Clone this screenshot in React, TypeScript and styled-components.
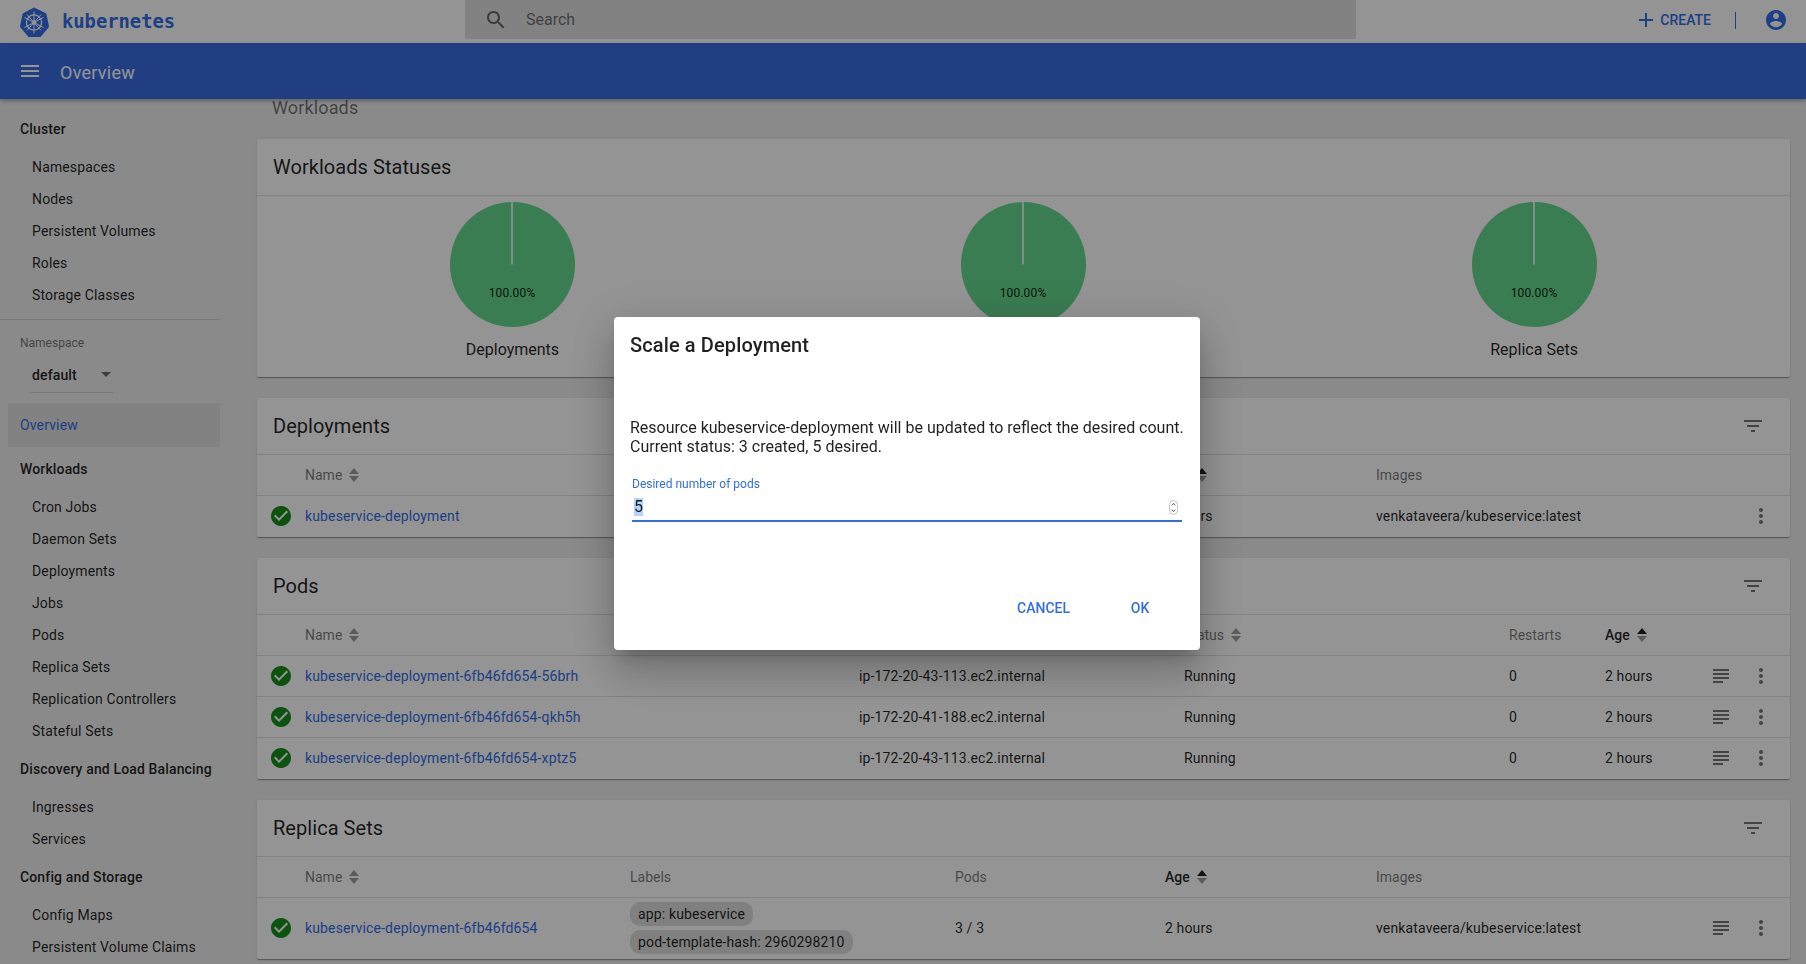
import React from "react";
import styled, { createGlobalStyle } from "styled-components";

const Global = createGlobalStyle`
  html, body { margin: 0; padding: 0; height: 100%; overflow: hidden; }
  body { font-family: Roboto, "Liberation Sans", sans-serif; font-size: 14px; letter-spacing: 0.14px; color: rgba(0,0,0,.87); background: #eeeeee; }
  * { box-sizing: border-box; }
`;

const BLUE = "#326de6";
const ICONS = {
  search: "M15.5 14h-.79l-.28-.27C15.41 12.59 16 11.11 16 9.5 16 5.91 13.09 3 9.5 3S3 5.91 3 9.5 5.91 16 9.5 16c1.61 0 3.09-.59 4.23-1.57l.27.28v.79l5 4.99L20.49 19l-4.99-5zm-6 0C7.01 14 5 11.99 5 9.5S7.01 5 9.5 5 14 7.01 14 9.5 11.99 14 9.5 14z",
  plus: "M19 13h-6v6h-2v-6H5v-2h6V5h2v6h6v2z",
  account: "M12 2C6.48 2 2 6.48 2 12s4.48 10 10 10 10-4.48 10-10S17.52 2 12 2zm0 3c1.66 0 3 1.34 3 3s-1.34 3-3 3-3-1.34-3-3 1.34-3 3-3zm0 14.2c-2.5 0-4.71-1.28-6-3.22.03-1.99 4-3.08 6-3.08 1.99 0 5.97 1.09 6 3.08-1.29 1.94-3.5 3.22-6 3.22z",
  menu: "M3 18h18v-2H3v2zm0-5h18v-2H3v2zm0-7v2h18V6H3z",
  filter: "M10 18h4v-2h-4v2zM3 6v2h18V6H3zm3 7h12v-2H6v2z",
  more: "M12 8c1.1 0 2-.9 2-2s-.9-2-2-2-2 .9-2 2 .9 2 2 2zm0 2c-1.1 0-2 .9-2 2s.9 2 2 2 2-.9 2-2-.9-2-2-2zm0 6c-1.1 0-2 .9-2 2s.9 2 2 2 2-.9 2-2-.9-2-2-2z",
  subject: "M14 17H4v2h10v-2zm6-8H4v2h16V9zM4 15h16v-2H4v2zM4 5v2h16V5H4z",
  check: "M12 2C6.48 2 2 6.48 2 12s4.48 10 10 10 10-4.48 10-10S17.52 2 12 2zm-2 15l-5-5 1.41-1.41L10 14.17l7.59-7.59L19 8l-9 9z",
};

const Icon = ({ d, color }: { d: string; color: string }) => (
  <svg width="24" height="24" viewBox="0 0 24 24" fill={color} style={{ display: "block", flex: "none" }}>
    <path d={d} />
  </svg>
);

const Page = styled.div`
  width: 1806px;
  height: 964px;
  overflow: hidden;
  display: flex;
  flex-direction: column;
  background: #eeeeee;
`;

const TopBar = styled.header`
  height: 43px;
  flex: none;
  display: flex;
  background: #ffffff;
`;
const Brand = styled.div`
  width: 465px;
  flex: none;
  display: flex;
  align-items: center;
  padding-left: 19px;
  gap: 13px;
`;
const BrandName = styled.span`
  font-family: "DejaVu Sans Mono", monospace;
  font-weight: 700;
  font-size: 18.8px;
  color: ${BLUE};
  line-height: 38px;
  letter-spacing: 0;
`;
const SearchBox = styled.div`
  width: 891px;
  height: 39px;
  flex: none;
  display: flex;
  align-items: center;
  gap: 18px;
  padding-left: 19px;
  background: #e0e0e0;
  border-radius: 0 0 2px 2px;
`;
const SearchHint = styled.span`
  font-size: 16px;
  letter-spacing: 0;
  color: rgba(0, 0, 0, 0.54);
`;
const Actions = styled.div`
  flex: 1;
  display: flex;
  align-items: center;
  justify-content: flex-end;
  padding-right: 18px;
  padding-bottom: 3px;
`;
const CreateButton = styled.span`
  display: flex;
  align-items: center;
  gap: 2px;
  font-weight: 500;
  font-size: 14px;
  letter-spacing: 0;
  color: ${BLUE};
`;
const VDivider = styled.span`
  width: 1px;
  height: 17px;
  margin: 0 28px 0 24px;
  background: ${BLUE};
`;

const ActionBar = styled.div`
  height: 56px;
  flex: none;
  display: flex;
  align-items: center;
  gap: 18px;
  padding-left: 18px;
  padding-bottom: 1px;
  background: #3b6ce0;
  position: relative;
  z-index: 1;
  box-shadow: 0 2px 4px rgba(0, 0, 0, 0.3);
`;
const BarTitle = styled.span`
  padding-top: 3px;
  font-size: 18px;
  letter-spacing: 0.25px;
  color: #ffffff;
`;

const Body = styled.div`
  flex: 1;
  min-height: 0;
  display: flex;
`;
const Sidebar = styled.nav`
  width: 241px;
  flex: none;
  padding-top: 14px;
`;
const NavHeading = styled.div`
  height: 32px;
  margin: 6px 0;
  padding-left: 20px;
  line-height: 32px;
  font-weight: 500;
  &:first-child { margin-top: 0; }
`;
const NavItem = styled.div`
  height: 32px;
  padding-left: 32px;
  line-height: 32px;
  color: rgba(0, 0, 0, 0.87);
`;
const NavDivider = styled.div`
  width: 220px;
  height: 1px;
  margin-top: 8px;
  background: rgba(0, 0, 0, 0.12);
`;
const NamespaceLabel = styled.div`
  margin-top: 15px;
  padding-left: 20px;
  font-size: 12px;
  line-height: 16px;
  letter-spacing: 0;
  color: rgba(0, 0, 0, 0.54);
`;
const NamespaceSelect = styled.div`
  width: 83px;
  height: 34px;
  margin: 8px 0 0 30px;
  padding: 0 2px 2px;
  display: flex;
  align-items: center;
  justify-content: space-between;
  font-weight: 500;
  border-bottom: 1px solid rgba(0, 0, 0, 0.12);
`;
const Caret = styled.span`
  width: 0;
  height: 0;
  border-left: 5px solid transparent;
  border-right: 5px solid transparent;
  border-top: 5px solid rgba(0, 0, 0, 0.54);
`;
const ActiveNav = styled.div`
  width: 212px;
  height: 44px;
  margin: 10px 0 0 8px;
  padding-left: 12px;
  line-height: 44px;
  color: ${BLUE};
  background: rgba(0, 0, 0, 0.06);
  border-radius: 2px;
`;

const Main = styled.main`
  flex: 1;
  min-width: 0;
  padding: 0 16.5px 0 16px;
`;
const Crumb = styled.div`
  height: 40px;
  padding-left: 15px;
  font-size: 18px;
  line-height: 18px;
  color: rgba(0, 0, 0, 0.54);
`;
const Card = styled.section`
  margin-bottom: 21px;
  background: #ffffff;
  border-radius: 2px;
  box-shadow: 0 2px 1px -1px rgba(0, 0, 0, 0.2), 0 1px 1px rgba(0, 0, 0, 0.14), 0 1px 3px rgba(0, 0, 0, 0.12);
`;
const CardHeader = styled.div`
  height: 57px;
  padding: 0 25px 1px 16px;
  display: flex;
  align-items: center;
  justify-content: space-between;
  font-size: 20px;
  letter-spacing: 0.05px;
  border-bottom: 1px solid rgba(0, 0, 0, 0.12);
`;
const Row = styled.div<{ $cols: string; $height: number }>`
  display: grid;
  grid-template-columns: ${(p) => p.$cols};
  align-items: center;
  height: ${(p) => p.$height}px;
  padding: 0 8px 1px 0;
  border-bottom: 1px solid rgba(0, 0, 0, 0.12);
  &:last-child { border-bottom: 0; }
`;
const HeadCell = styled.div<{ $active?: boolean }>`
  display: flex;
  align-items: center;
  gap: 7px;
  letter-spacing: 0;
  color: ${(p) => (p.$active ? "rgba(0,0,0,.87)" : "rgba(0,0,0,.54)")};
  font-weight: ${(p) => (p.$active ? 500 : 400)};
`;
const Cell = styled.div`
  color: rgba(0, 0, 0, 0.87);
`;
const IconCell = styled.div`
  display: flex;
  justify-content: center;
`;
const Link = styled.span`
  color: ${BLUE};
`;
const Chip = styled.span`
  display: block;
  width: fit-content;
  height: 24px;
  padding: 0 8px;
  line-height: 24px;
  border-radius: 10px;
  background: #dcdcdc;
  & + & { margin-top: 4px; }
`;
const PieGrid = styled.div`
  display: grid;
  grid-template-columns: repeat(3, 1fr);
  padding: 6px 0 15px;
`;
const PieColumn = styled.div`
  display: flex;
  flex-direction: column;
  align-items: center;
`;
const PieLabel = styled.div`
  margin-top: 11px;
  font-size: 16px;
  line-height: 24px;
  letter-spacing: 0;
`;

const Overlay = styled.div`
  position: fixed;
  inset: 0;
  z-index: 10;
  background: rgba(0, 0, 0, 0.42);
`;
const Dialog = styled.div`
  position: absolute;
  left: 614px;
  top: 317px;
  width: 586px;
  height: 333px;
  padding: 16px 16px 24px;
  display: flex;
  flex-direction: column;
  background: #ffffff;
  border-radius: 4px;
  box-shadow: 0 11px 15px -7px rgba(0, 0, 0, 0.2), 0 24px 38px 3px rgba(0, 0, 0, 0.14), 0 9px 46px 8px rgba(0, 0, 0, 0.12);
`;
const DialogTitle = styled.h2`
  margin: 0;
  font-size: 20px;
  line-height: 24px;
  font-weight: 500;
  letter-spacing: 0.12px;
`;
const DialogText = styled.p`
  margin: 61px 0 0;
  font-size: 16px;
  line-height: 19px;
  letter-spacing: 0;
  white-space: nowrap;
`;
const Field = styled.div`
  margin: 21px 2px 0;
`;
const FieldLabel = styled.div`
  font-size: 12px;
  line-height: 14px;
  letter-spacing: 0;
  color: ${BLUE};
`;
const FieldInput = styled.div`
  height: 24px;
  margin-top: 7px;
  padding: 0 4px 4px 2px;
  display: flex;
  align-items: center;
  justify-content: space-between;
  font-size: 16px;
  letter-spacing: 0;
  border-bottom: 2px solid ${BLUE};
`;
const Selected = styled.span`
  background: #b3d4fc;
  line-height: 18px;
`;
const DialogFooter = styled.div`
  margin-top: auto;
  padding-right: 12px;
  display: flex;
  justify-content: flex-end;
  gap: 22px;
`;
const TextButton = styled.span`
  min-width: 64px;
  height: 36px;
  padding: 0 16px;
  text-align: center;
  line-height: 36px;
  font-weight: 500;
  letter-spacing: 0;
  color: ${BLUE};
`;

const Logo = () => (
  <svg width="30" height="30" viewBox="0 0 30 30" style={{ flex: "none" }}>
    <path d="M15 .5 26.4 6q.9.4 1.1 1.4l2.4 11.4q.2 1-.4 1.8l-8 9.4H9.5l-8-9.4q-.6-.8-.4-1.8L3.5 7.4Q3.7 6.4 4.6 6z" fill={BLUE} />
    <g stroke="#fff" strokeWidth="1.3" fill="none" strokeLinecap="round">
      <circle cx="15" cy="15.5" r="7.6" />
      <circle cx="15" cy="15.5" r="2" fill="#fff" strokeWidth="0.6" />
      <path d="M15 4.8v21.4M5.8 10.6l18.4 9.8M24.2 10.6 5.8 20.4M8.2 7.8l13.6 15.4M21.8 7.8 8.2 23.2" strokeWidth="1" />
    </g>
  </svg>
);

const Sort = ({ active }: { active?: boolean }) => (
  <svg width="10" height="14" viewBox="0 0 10 14" style={{ display: "block", flex: "none" }}>
    <path d="M0 6 5 0l5 6z" fill={active ? "rgba(0,0,0,.87)" : "rgba(0,0,0,.38)"} />
    <path d="M0 8h10l-5 6z" fill="rgba(0,0,0,.38)" />
  </svg>
);

const Pie = () => (
  <svg width="125" height="125" viewBox="0 0 125 125" style={{ display: "block" }}>
    <circle cx="62.5" cy="62.5" r="62.5" fill="#66d78d" />
    <rect x="61.2" y="0" width="1.6" height="62.5" fill="#ffffff" />
    <text x="62" y="95" textAnchor="middle" fontSize="12" letterSpacing="0.15" fontFamily="Roboto, sans-serif" fill="rgba(0,0,0,.87)">100.00%</text>
  </svg>
);

const Head = ({ label, sort, active }: { label: string; sort?: boolean; active?: boolean }) => (
  <HeadCell $active={active}>
    {label}
    {sort && <Sort active={active} />}
  </HeadCell>
);

const GREEN = "#158f1c";
const GREY = "rgba(0,0,0,.54)";
const RS_COLS = "48px 325px 325px 210px 211px 325px 40px 40px";
const POD_COLS = "48px 554px 325px 325px 96px 96px 40px 40px";

const navGroups = [
  { title: "Workloads", items: ["Cron Jobs", "Daemon Sets", "Deployments", "Jobs", "Pods", "Replica Sets", "Replication Controllers", "Stateful Sets"] },
  { title: "Discovery and Load Balancing", items: ["Ingresses", "Services"] },
  { title: "Config and Storage", items: ["Config Maps", "Persistent Volume Claims"] },
];

const pods = [
  { name: "kubeservice-deployment-6fb46fd654-56brh", node: "ip-172-20-43-113.ec2.internal" },
  { name: "kubeservice-deployment-6fb46fd654-qkh5h", node: "ip-172-20-41-188.ec2.internal" },
  { name: "kubeservice-deployment-6fb46fd654-xptz5", node: "ip-172-20-43-113.ec2.internal" },
];

const WorkloadHead = () => (
  <Row $cols={RS_COLS} $height={41}>
    <span />
    <Head label="Name" sort />
    <Head label="Labels" />
    <Head label="Pods" />
    <Head label="Age" sort active />
    <Head label="Images" />
  </Row>
);

export default function App() {
  return (
    <Page>
      <Global />
      <TopBar>
        <Brand>
          <Logo />
          <BrandName>kubernetes</BrandName>
        </Brand>
        <SearchBox>
          <Icon d={ICONS.search} color={GREY} />
          <SearchHint>Search</SearchHint>
        </SearchBox>
        <Actions>
          <CreateButton>
            <Icon d={ICONS.plus} color={BLUE} />
            CREATE
          </CreateButton>
          <VDivider />
          <Icon d={ICONS.account} color={BLUE} />
        </Actions>
      </TopBar>
      <ActionBar>
        <Icon d={ICONS.menu} color="#fff" />
        <BarTitle>Overview</BarTitle>
      </ActionBar>
      <Body>
        <Sidebar>
          <NavHeading>Cluster</NavHeading>
          {["Namespaces", "Nodes", "Persistent Volumes", "Roles", "Storage Classes"].map((n) => (
            <NavItem key={n}>{n}</NavItem>
          ))}
          <NavDivider />
          <NamespaceLabel>Namespace</NamespaceLabel>
          <NamespaceSelect>
            default
            <Caret />
          </NamespaceSelect>
          <ActiveNav>Overview</ActiveNav>
          {navGroups.map((g) => (
            <React.Fragment key={g.title}>
              <NavHeading>{g.title}</NavHeading>
              {g.items.map((n) => (
                <NavItem key={n}>{n}</NavItem>
              ))}
            </React.Fragment>
          ))}
        </Sidebar>
        <Main>
          <Crumb>Workloads</Crumb>
          <Card>
            <CardHeader>Workloads Statuses</CardHeader>
            <PieGrid>
              {["Deployments", "Pods", "Replica Sets"].map((n) => (
                <PieColumn key={n}>
                  <Pie />
                  <PieLabel>{n}</PieLabel>
                </PieColumn>
              ))}
            </PieGrid>
          </Card>
          <Card>
            <CardHeader>
              Deployments
              <Icon d={ICONS.filter} color={GREY} />
            </CardHeader>
            <WorkloadHead />
            <Row $cols={RS_COLS} $height={41}>
              <IconCell><Icon d={ICONS.check} color={GREEN} /></IconCell>
              <Link>kubeservice-deployment</Link>
              <Chip>app: kubeservice</Chip>
              <Cell>3 / 5</Cell>
              <Cell>2 hours</Cell>
              <Cell>venkataveera/kubeservice:latest</Cell>
              <span />
              <IconCell><Icon d={ICONS.more} color={GREY} /></IconCell>
            </Row>
          </Card>
          <Card>
            <CardHeader>
              Pods
              <Icon d={ICONS.filter} color={GREY} />
            </CardHeader>
            <Row $cols={POD_COLS} $height={41}>
              <span />
              <Head label="Name" sort />
              <Head label="Node" />
              <Head label="Status" sort />
              <Head label="Restarts" />
              <Head label="Age" sort active />
            </Row>
            {pods.map((p) => (
              <Row key={p.name} $cols={POD_COLS} $height={41}>
                <IconCell><Icon d={ICONS.check} color={GREEN} /></IconCell>
                <Link>{p.name}</Link>
                <Cell>{p.node}</Cell>
                <Cell>Running</Cell>
                <Cell>0</Cell>
                <Cell>2 hours</Cell>
                <IconCell><Icon d={ICONS.subject} color={GREY} /></IconCell>
                <IconCell><Icon d={ICONS.more} color={GREY} /></IconCell>
              </Row>
            ))}
          </Card>
          <Card>
            <CardHeader>
              Replica Sets
              <Icon d={ICONS.filter} color={GREY} />
            </CardHeader>
            <WorkloadHead />
            <Row $cols={RS_COLS} $height={61}>
              <IconCell><Icon d={ICONS.check} color={GREEN} /></IconCell>
              <Link>kubeservice-deployment-6fb46fd654</Link>
              <div>
                <Chip>app: kubeservice</Chip>
                <Chip>pod-template-hash: 2960298210</Chip>
              </div>
              <Cell>3 / 3</Cell>
              <Cell>2 hours</Cell>
              <Cell>venkataveera/kubeservice:latest</Cell>
              <IconCell><Icon d={ICONS.subject} color={GREY} /></IconCell>
              <IconCell><Icon d={ICONS.more} color={GREY} /></IconCell>
            </Row>
          </Card>
        </Main>
      </Body>
      <Overlay>
        <Dialog>
          <DialogTitle>Scale a Deployment</DialogTitle>
          <DialogText>
            Resource kubeservice-deployment will be updated to reflect the desired count.
            <br />
            Current status: 3 created, 5 desired.
          </DialogText>
          <Field>
            <FieldLabel>Desired number of pods</FieldLabel>
            <FieldInput>
              <Selected>5</Selected>
              <svg width="9" height="15" viewBox="0 0 9 15" style={{ display: "block" }}>
                <rect x="0.5" y="0.5" width="8" height="14" rx="4" fill="#fff" stroke="#c4c4c4" />
                <path d="M2.8 5.4 4.5 3.4l1.7 2M2.8 9.6l1.7 2 1.7-2" fill="none" stroke="#444" strokeWidth="0.9" />
              </svg>
            </FieldInput>
          </Field>
          <DialogFooter>
            <TextButton>CANCEL</TextButton>
            <TextButton>OK</TextButton>
          </DialogFooter>
        </Dialog>
      </Overlay>
    </Page>
  );
}
